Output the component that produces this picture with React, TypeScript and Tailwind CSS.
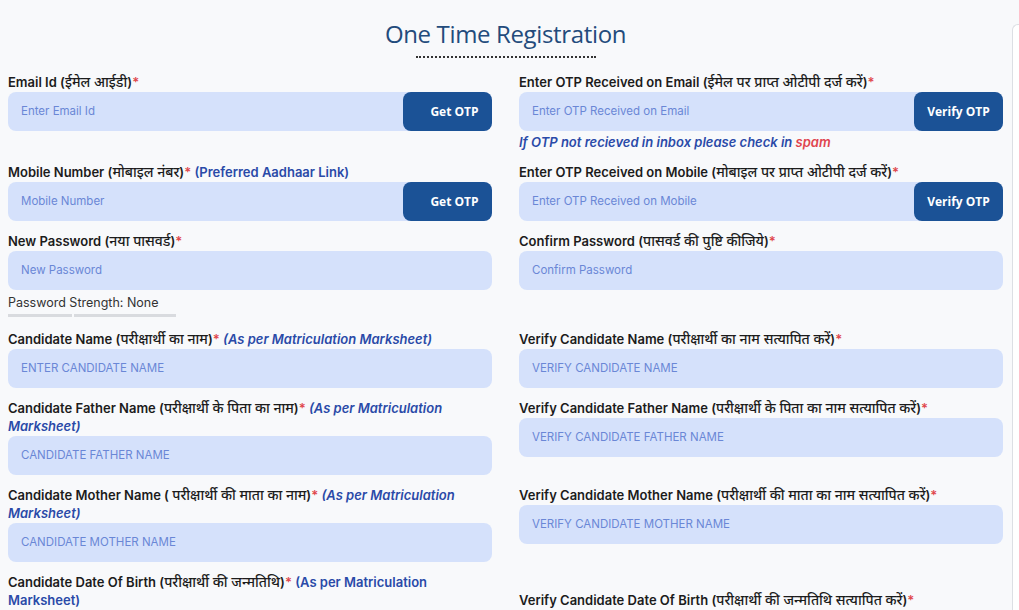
import React from 'react'

const label = "text-[13px] leading-[18px] font-semibold text-[#1c1c1c]"
const inputBox = "h-[39px] rounded-[8px] flex items-center pl-[13px] text-[11.5px] text-[#6a87d6]"
const btn = "w-[89px] h-[39px] bg-[#1b5296] rounded-[8px] text-white text-[12px] font-bold flex items-center justify-center shrink-0"
const note = "text-[#2a4aa8] font-semibold italic"

function Star() {
  return <span className="text-[#e0474c]">*</span>
}

// Devanagari part of the labels, set a touch larger
function Hi({ children }: { children: React.ReactNode }) {
  return <span className="text-[14px] font-medium">{children}</span>
}

function Field({ children, placeholder, button, shift }: { children: React.ReactNode; placeholder: string; button?: string; shift?: boolean }) {
  return (
    <div>
      <div className={label}>{children}</div>
      <div className="flex mt-[1px] bg-[#d5e1fb] rounded-[8px]">
        <div className={inputBox + ' flex-1'}>{placeholder}</div>
        {button && (
          <div className={btn + (shift ? ' pl-[14px]' : '')} style={{ fontFamily: '"Open Sans", sans-serif' }}>
            {button}
          </div>
        )}
      </div>
    </div>
  )
}

export default function App() {
  return (
    <div className="min-h-screen bg-[#f8f9fb] flex" style={{ fontFamily: 'Inter, "Noto Sans", sans-serif' }}>
      <div className="w-[1012px] pl-[8px] pt-[18px]">
        {/* Title */}
        <div className="w-[995px] flex justify-center">
          <div className="flex flex-col items-center">
            <h1
              className="text-[24px] leading-[32px] text-[#234b7c] font-medium tracking-[-0.35px]"
              style={{ fontFamily: '"Open Sans", sans-serif' }}
            >
              One Time Registration
            </h1>
            <div className="w-[180px] mt-[6px] border-b-2 border-dotted border-[#333]" />
          </div>
        </div>

        <div className="grid grid-cols-[484px_484px] gap-x-[27px] mt-[15px]">
          {/* Row 1 */}
          <div>
            <Field placeholder="Enter Email Id" button="Get OTP" shift>
              Email Id (<Hi>ईमेल आईडी</Hi>)<Star />
            </Field>
          </div>
          <div>
            <Field placeholder="Enter OTP Received on Email" button="Verify OTP">
              Enter OTP Received on Email (<Hi>ईमेल पर प्राप्त ओटीपी दर्ज करें</Hi>)<Star />
            </Field>
            <div className="text-[13px] leading-[18px] font-semibold italic text-[#2a4aa8] mt-[2px]">
              If OTP not recieved in inbox please check in <span className="text-[#e0454f]">spam</span>
            </div>
          </div>

          {/* Row 2 */}
          <div className="mt-[12px]">
            <Field placeholder="Mobile Number" button="Get OTP" shift>
              Mobile Number (<Hi>मोबाइल नंबर</Hi>)<Star /> <span className="text-[#2a4aa8] font-semibold">(Preferred Aadhaar Link)</span>
            </Field>
          </div>
          <div className="mt-[12px]">
            <Field placeholder="Enter OTP Received on Mobile" button="Verify OTP">
              Enter OTP Received on Mobile (<Hi>मोबाइल पर प्राप्त ओटीपी दर्ज करें</Hi>)<Star />
            </Field>
          </div>

          {/* Row 3 */}
          <div className="mt-[11px]">
            <Field placeholder="New Password">
              New Password (<Hi>नया पासवर्ड</Hi>)<Star />
            </Field>
            <div className="text-[12.5px] leading-[18px] text-[#333] mt-[4px]">Password Strength: None</div>
            <div className="flex gap-[2px] mt-[2px] w-[168px]">
              <div className="h-[3px] w-[64px] bg-[#d9dbdf]" />
              <div className="h-[3px] flex-1 bg-[#d9dbdf]" />
            </div>
          </div>
          <div className="mt-[11px]">
            <Field placeholder="Confirm Password">
              Confirm Password (<Hi>पासवर्ड की पुष्टि कीजिये</Hi>)<Star />
            </Field>
          </div>

          {/* Row 4 */}
          <div className="mt-[13px]">
            <Field placeholder="ENTER CANDIDATE NAME">
              Candidate Name (<Hi>परीक्षार्थी का नाम</Hi>)<Star /> <span className={note}>(As per Matriculation Marksheet)</span>
            </Field>
          </div>
          <div className="mt-[13px]">
            <Field placeholder="VERIFY CANDIDATE NAME">
              Verify Candidate Name (<Hi>परीक्षार्थी का नाम सत्यापित करें</Hi>)<Star />
            </Field>
          </div>

          {/* Row 5 */}
          <div className="mt-[11px]">
            <Field placeholder="CANDIDATE FATHER NAME">
              Candidate Father Name (<Hi>परीक्षार्थी के पिता का नाम</Hi>)<Star /> <span className={note}>(As per Matriculation Marksheet)</span>
            </Field>
          </div>
          <div className="mt-[11px]">
            <Field placeholder="VERIFY CANDIDATE FATHER NAME">
              Verify Candidate Father Name (<Hi>परीक्षार्थी के पिता का नाम सत्यापित करें</Hi>)<Star />
            </Field>
          </div>

          {/* Row 6 */}
          <div className="mt-[11px]">
            <Field placeholder="CANDIDATE MOTHER NAME">
              Candidate Mother Name ( <Hi>परीक्षार्थी की माता का नाम</Hi>)<Star /> <span className={note}>(As per Matriculation Marksheet)</span>
            </Field>
          </div>
          <div className="mt-[11px]">
            <Field placeholder="VERIFY CANDIDATE MOTHER NAME">
              Verify Candidate Mother Name (<Hi>परीक्षार्थी की माता का नाम सत्यापित करें</Hi>)<Star />
            </Field>
          </div>

          {/* Row 7 */}
          <div className="mt-[11px]">
            <div className={label}>
              Candidate Date Of Birth (<Hi>परीक्षार्थी की जन्मतिथि</Hi>)<Star /> <span className="text-[#2a4aa8] font-semibold">(As per Matriculation Marksheet)</span>
            </div>
          </div>
          <div className="mt-[29px]">
            <div className={label}>
              Verify Candidate Date Of Birth (<Hi>परीक्षार्थी की जन्मतिथि सत्यापित करें</Hi>)<Star />
            </div>
          </div>
        </div>
      </div>

      {/* edge of neighbouring panel */}
      <div className="flex-1 mt-[24px] border-l border-t border-[#dcdfe4] rounded-tl-[6px] bg-white" />
    </div>
  )
}
